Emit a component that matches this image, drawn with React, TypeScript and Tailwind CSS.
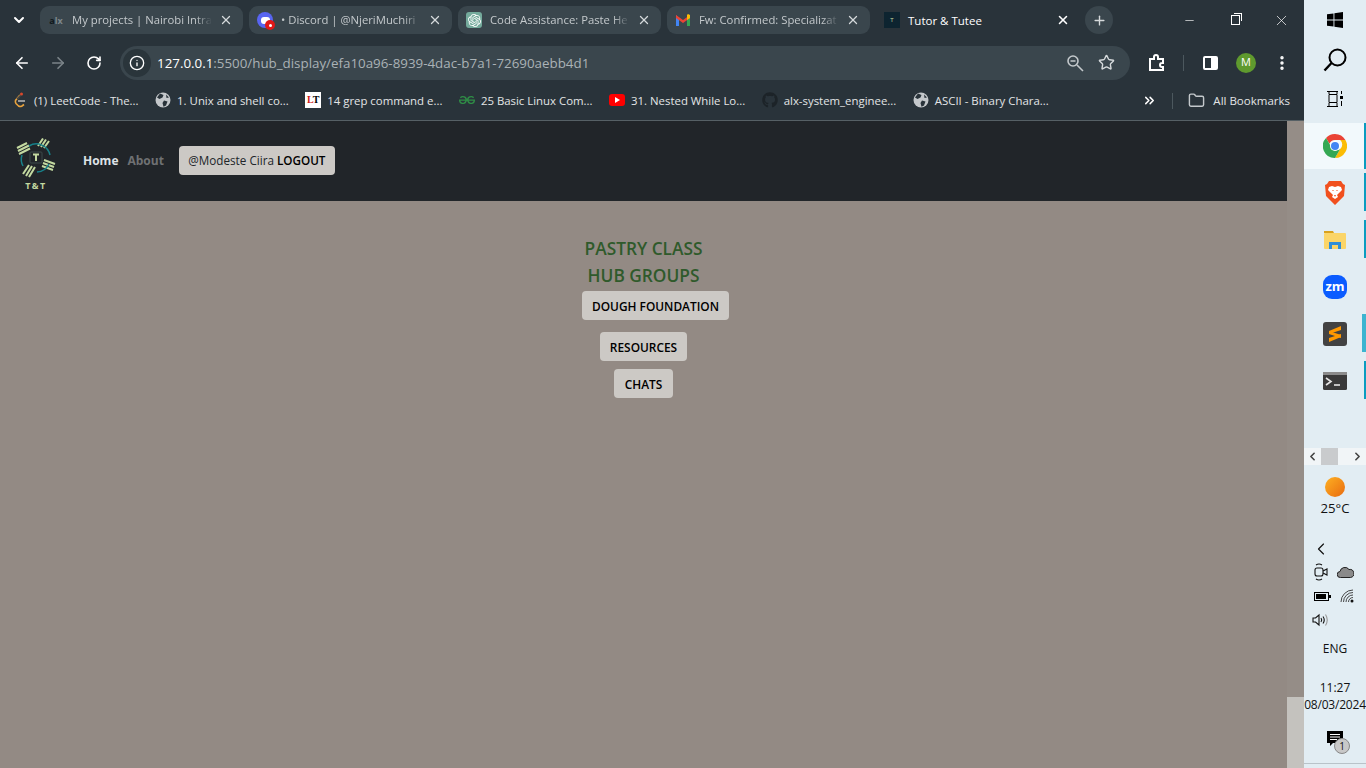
import React from 'react';
import { ArrowLeft, ArrowRight, RotateCw, Info, Star, ChevronDown, ChevronLeft, ChevronRight, ChevronsRight, X, Plus, Minus, EllipsisVertical, Folder } from 'lucide-react';
import { FaGithub } from 'react-icons/fa';
import { SiGeeksforgeeks, SiOpenai } from 'react-icons/si';

const chromeFont = "font-['Open_Sans','Noto_Sans',sans-serif]";

const LogoIcon = () => (
  <svg width="40" height="40" viewBox="0 0 40 40">
    <g stroke="#c3d9a0" strokeWidth="2" fill="none">
      <path d="M1 10 L11 5 M2 13 L13 7.5 M3 16 L14 10.5" />
      <path d="M22 8 L27 0.5 M25 9 L30 1.5 M28 10 L33 3" />
      <path d="M28 22 L39 26 M27 25 L38 29 M26 28 L37 32" />
      <path d="M19 29 L13 39 M16 28 L10 38 M13 27 L7 36" />
    </g>
    <g stroke="#178089" strokeWidth="1.5" fill="none">
      <path d="M13 8 A14 14 0 0 1 34 17" />
      <path d="M33 26 A14 14 0 0 1 21 34" />
      <path d="M7 28 A14 14 0 0 1 6 17" />
    </g>
    <rect x="14" y="14" width="12" height="11" rx="1" fill="#212529" stroke="#3d4a4a" />
    <path d="M17 16.5 H23 M20 16.5 V23" stroke="#c3d9a0" strokeWidth="2" />
  </svg>
);

const ChromeLogo = () => (
  <svg width="24" height="24" viewBox="0 0 24 24">
    <path d="M12 0a12 12 0 0 1 10.4 6H12a6 6 0 0 0-5.6 3.8L3 3.9A12 12 0 0 1 12 0z" fill="#ea4335" />
    <path d="M22.4 6A12 12 0 0 1 12 24l5.2-9a6 6 0 0 0 0-9z" fill="#fbbc04" />
    <path d="M12 24A12 12 0 0 1 3 3.9L8 12.6a6 6 0 0 0 9.2 2.4z" fill="#34a853" />
    <circle cx="12" cy="12" r="5" fill="#fff" />
    <circle cx="12" cy="12" r="4" fill="#4285f4" />
  </svg>
);

const GmailIcon = () => (
  <svg width="16" height="16" viewBox="0 0 16 16">
    <path d="M1 3v11h3V7z" fill="#4285f4" />
    <path d="M15 3v11h-3V7z" fill="#34a853" />
    <path d="M1 3l7 5 7-5v3L8 11 1 6z" fill="#ea4335" />
    <path d="M13 2l2 1v3l-3 2V3z" fill="#fbbc04" />
  </svg>
);

// grey globe favicon chrome shows when a page has none
const GlobeIcon = () => (
  <svg width="16" height="16" viewBox="0 0 16 16">
    <circle cx="8" cy="8" r="7.5" fill="#c4c8cb" />
    <path d="M5 1.5 8.5 3 7.5 5.5 4.5 7 2 5.5ZM9 8.5l3.5 1-1.5 4-2.5 1.2L7.5 11ZM11 2.5l3 3-2.5.5z" fill="#29333a" />
  </svg>
);

const tabs = [
  {
    title: 'My projects | Nairobi Intra',
    w: 'w-[203px]',
    icon: <span className="text-[9px] leading-none font-bold text-[#10181c]">a<span className="text-[#7d868b]">l</span><span className="text-[#7d868b]">x</span></span>,
  },
  {
    title: '• Discord | @NjeriMuchiri',
    w: 'w-[203px]',
    icon: (
      <span className="relative w-4 h-4 rounded-full bg-[#5865f2] flex items-center justify-center">
        <span className="w-[9px] h-[7px] rounded-[3px] bg-white" />
        <span className="absolute -right-[2px] -bottom-[2px] w-[10px] h-[10px] rounded-full bg-[#e01818] flex items-center justify-center">
          <span className="w-[3px] h-[3px] rounded-full bg-white" />
        </span>
      </span>
    ),
  },
  {
    title: 'Code Assistance: Paste He',
    w: 'w-[203px]',
    icon: (
      <span className="w-4 h-4 rounded-[3px] bg-[#74aa9c] flex items-center justify-center text-white">
        <SiOpenai size={13} />
      </span>
    ),
  },
  { title: 'Fw: Confirmed: Specializat', w: 'w-[203px]', icon: <GmailIcon /> },
];

const bookmarks = [
  {
    title: '(1) LeetCode - The...',
    icon: (
      <svg width="16" height="16" viewBox="0 0 16 16" fill="none">
        <path d="M8 3 L3.5 8.5 Q3 10 4 11.5 L6.5 14 Q8 15 10 14 L12 12.5" stroke="#e8a33d" strokeWidth="1.6" />
        <path d="M6 9 H13" stroke="#b3b3b3" strokeWidth="1.6" />
        <path d="M9 3 L5 7" stroke="#444" strokeWidth="1.6" />
        <circle cx="9.5" cy="2" r="1.5" fill="#d9482b" />
      </svg>
    ),
  },
  { title: '1. Unix and shell co...', icon: <GlobeIcon /> },
  {
    title: '14 grep command e...',
    icon: <span className="w-4 h-4 bg-white text-[10px] leading-4 font-bold text-center font-['Liberation_Serif',serif]"><span className="text-[#d01818]">L</span><span className="text-black">T</span></span>,
  },
  { title: '25 Basic Linux Com...', icon: <SiGeeksforgeeks size={16} className="text-[#2f8d46]" /> },
  {
    title: '31. Nested While Lo...',
    icon: (
      <span className="w-4 h-3 rounded-[3px] bg-[#f00] flex items-center justify-center">
        <span className="w-0 h-0 border-y-[3px] border-y-transparent border-l-[5px] border-l-white" />
      </span>
    ),
  },
  { title: 'alx-system_enginee...', icon: <FaGithub size={16} className="text-[#1c2328]" /> },
  { title: 'ASCII - Binary Chara...', icon: <GlobeIcon /> },
];

const TabStrip = () => (
  <div className="h-[41px] flex items-start pt-[6px] pl-[5px]">
    <div className="w-[28px] h-[28px] flex items-center justify-center text-white">
      <ChevronDown size={16} strokeWidth={3} />
    </div>
    <div className="flex gap-[6px] ml-[7px]">
      {tabs.map((t) => (
        <div key={t.title} className={`${t.w} h-[28px] rounded-[9px] bg-[#3a464d] flex items-center pl-[8px] pr-[10px]`}>
          <span className="w-4 h-4 flex items-center justify-center shrink-0">{t.icon}</span>
          <span className="ml-[8px] w-[140px] pt-[1px] text-[11.3px] text-[#c4c9cc] whitespace-nowrap [mask-image:linear-gradient(to_right,black_88%,transparent)]">{t.title}</span>
          <X size={14} strokeWidth={2.2} className="ml-auto shrink-0 text-[#d5d9db]" />
        </div>
      ))}
      <div className="w-[203px] h-[28px] flex items-center pl-[8px] pr-[9px]">
        <span className="w-4 h-4 bg-[#0d2430] shrink-0 flex items-center justify-center text-[6px] text-[#c7dba0]">T</span>
        <span className="ml-[8px] flex-1 pt-[1px] text-[11.5px] text-white whitespace-nowrap">Tutor &amp; Tutee</span>
        <X size={14} strokeWidth={2.6} className="text-white" />
      </div>
    </div>
    <div className="w-[28px] h-[28px] ml-[6px] rounded-full bg-[#3a464d] flex items-center justify-center text-[#d5d9db]">
      <Plus size={15} strokeWidth={2.2} />
    </div>
    <div className="ml-auto flex items-center h-[28px] text-white">
      <div className="w-[46px] flex justify-center"><Minus size={13} strokeWidth={1.2} /></div>
      <div className="w-[46px] flex justify-center">
        <span className="relative w-[9px] h-[10px] border border-white">
          <span className="absolute -top-[3px] -right-[3px] w-[8px] h-[8px] border-t border-r border-white" />
        </span>
      </div>
      <div className="w-[46px] flex justify-center"><X size={17} strokeWidth={1} /></div>
    </div>
  </div>
);

const Toolbar = () => (
  <div className="h-[43px] flex items-center pl-[13px]">
    <ArrowLeft size={18} strokeWidth={2.2} className="text-white" />
    <ArrowRight size={18} strokeWidth={2.2} className="text-[#7b8489] ml-[18px]" />
    <RotateCw size={16} strokeWidth={2.4} className="text-white ml-[19px]" />
    <div className="ml-[18px] w-[1010px] h-[34px] rounded-full bg-[#3a464d] flex items-center pl-[3px] pr-[15px]">
      <span className="w-[28px] h-[28px] rounded-full bg-[#2a353b] flex items-center justify-center">
        <Info size={16} strokeWidth={2} className="text-white" />
      </span>
      <span className="ml-[6px] pt-[1px] text-[13.35px] text-[#aab2b6] whitespace-nowrap">
        <span className="text-white">127.0.0.1</span>:5500/hub_display/efa10a96-8939-4dac-b7a1-72690aebb4d1
      </span>
      <svg width="18" height="18" viewBox="0 0 18 18" fill="none" stroke="#c4c9cc" strokeWidth="1.6" className="ml-auto">
        <circle cx="7" cy="7" r="5" />
        <path d="M11 11l6 6M4.5 7h5" />
      </svg>
      <Star size={17} strokeWidth={2} className="ml-[14px] text-[#d5d9db]" />
    </div>
    <svg width="18" height="18" viewBox="0 0 18 18" className="ml-[18px]" fill="none" stroke="#fff" strokeWidth="2">
      <path d="M2 5h4V3a2 2 0 0 1 4 0v2h5v4h-1a2 2 0 0 0 0 4h1v3H2z" />
    </svg>
    <span className="ml-[17px] w-px h-[16px] bg-[#4c585e]" />
    <span className="ml-[19px] w-[15px] h-[14px] rounded-[2px] border-2 border-white bg-white flex">
      <span className="w-[6px] h-full bg-[#29333a]" />
    </span>
    <span className="ml-[18px] w-[20px] h-[20px] rounded-full bg-[#5f9a2e] text-white text-[11px] flex items-center justify-center">M</span>
    <EllipsisVertical size={18} strokeWidth={2.6} className="text-white ml-[17px]" />
  </div>
);

const BookmarksBar = () => (
  <div className="h-[37px] flex items-center pl-[12px] pb-[3px] border-b border-[#566065]">
    <div className="flex items-center gap-[16.5px]">
      {bookmarks.map((b) => (
        <div key={b.title} className="flex items-center gap-[6px] whitespace-nowrap">
          <span className="w-4 h-4 flex items-center justify-center shrink-0">{b.icon}</span>
          <span className="text-[11.4px] text-[#e3e5e6]">{b.title}</span>
        </div>
      ))}
    </div>
    <div className="ml-auto flex items-center pr-[14px]">
      <ChevronsRight size={15} strokeWidth={2.4} className="text-white" />
      <span className="ml-[15px] w-px h-[16px] bg-[#4c585e]" />
      <Folder size={17} className="ml-[15px] text-[#c4c9cc]" />
      <span className="ml-[8px] text-[11.5px] text-[#e3e5e6]">All Bookmarks</span>
    </div>
  </div>
);

const NavBar = () => (
  <nav className="h-[80px] bg-[#212529] flex items-start pl-[16px] font-['Open_Sans',sans-serif]">
    <div className="w-[40px] pt-[17px] flex flex-col items-center">
      <LogoIcon />
      <span className="text-[9px] leading-[10px] mt-[3px] font-bold tracking-[1.5px] text-[#c3d9a0]">T&amp;T</span>
    </div>
    <a className="ml-[27px] mt-[32px] text-[12px] leading-[16px] font-bold text-[#dee2e6]">Home</a>
    <a className="ml-[9px] mt-[32px] text-[12px] leading-[16px] font-bold text-[#6f7173]">About</a>
    <button className="ml-[15px] mt-[25px] w-[156px] h-[29px] rounded-[4px] bg-[#ccc9c5] text-[11.7px] text-[#212529] whitespace-nowrap">
      @Modeste Ciira <span className="font-semibold text-black">LOGOUT</span>
    </button>
  </nav>
);

const HubButton = ({ label, className = '' }: { label: string; className?: string }) => (
  <button className={`h-[29px] pt-[2px] rounded-[4px] bg-[#ccc9c5] text-[11.9px] font-semibold text-black whitespace-nowrap ${className}`}>
    {label}
  </button>
);

const PageContent = () => (
  <main className="flex-1 flex flex-col items-center pt-[36px] font-['Open_Sans',sans-serif]">
    <h2 className="text-[17.3px] leading-[24px] font-semibold text-[#2f5a2b]">PASTRY CLASS</h2>
    <h2 className="text-[17.3px] leading-[24px] mt-[3px] font-semibold text-[#2f5a2b]">HUB GROUPS</h2>
    <HubButton label="DOUGH FOUNDATION" className="w-[147px] ml-[24px] mt-[3px]" />
    <HubButton label="RESOURCES" className="w-[87px] mt-[12px]" />
    <HubButton label="CHATS" className="w-[59px] mt-[8px]" />
  </main>
);

const TaskIcon = ({ children, bar = false, active = false, wideBar = false }: { children: React.ReactNode; bar?: boolean; active?: boolean; wideBar?: boolean }) => (
  <div className={`relative flex items-center justify-center ${active ? 'h-[46px] bg-[#f2f9fc]' : 'h-[47px]'}`}>
    {children}
    {bar && (
      <span
        className={`absolute right-0 ${active ? 'top-0 h-[46px]' : 'top-[4px] h-[38px]'} ${wideBar ? 'w-[4px] bg-[#3cb4d0]' : 'w-[2px] bg-[#0a9cc0]'}`}
      />
    )}
  </div>
);

const Taskbar = () => (
  <aside className="relative w-[62px] h-[768px] shrink-0 bg-[#e2edf3] flex flex-col items-stretch font-['Open_Sans',sans-serif] text-[#111]">
    <div className="h-[123px] flex flex-col items-center pt-[12px]">
      <svg width="16" height="16" viewBox="0 0 16 16" fill="#000">
        <path d="M0 2.3 6.5 1.4V7.5H0zM7.4 1.3 16 0V7.5H7.4zM0 8.4H6.5V14.6L0 13.7zM7.4 8.4H16V16L7.4 14.7z" />
      </svg>
      <svg width="24" height="24" viewBox="0 0 24 24" fill="none" stroke="#000" strokeWidth="2" className="mt-[20px]">
        <circle cx="14.5" cy="9.5" r="8" />
        <path d="M8.5 15 L1.5 22.5" strokeWidth="2.4" />
      </svg>
      <svg width="16" height="16" viewBox="0 0 16 16" fill="none" stroke="#000" className="mt-[19px]">
        <path d="M0 .5H11M2 3.5H10V11.5H2ZM0 15.5H11M2 .5V3M10 .5V3M2 12V15M10 12V15" />
        <rect x="13" y="5" width="3" height="3" fill="#000" stroke="none" />
        <path d="M14.5 0V3M14.5 10V15" />
      </svg>
    </div>
    <TaskIcon active bar><ChromeLogo /></TaskIcon>
    <TaskIcon bar>
      <svg width="20" height="24" viewBox="0 0 20 24">
        <path d="M4 0h12l2 3 2 1-1 11-9 9-9-9L0 4l2-1z" fill="#f1501e" />
        <path d="M4 6l3-1 3 1 3-1 3 1 1 3-3 3-2 2 1 2-3 2-3-2 1-2-2-2-3-3z" fill="#fff" />
        <path d="M7 9h2l-1 1zM11 9h2l-1 1zM9 14h2l-1 2z" fill="#f1501e" />
      </svg>
    </TaskIcon>
    <TaskIcon bar>
      <svg width="22" height="18" viewBox="0 0 22 18">
        <path d="M0 0h9l1 2H0z" fill="#d9a21e" />
        <rect y="2" width="22" height="16" rx="1" fill="#fbd568" />
        <path d="M5 18v-7h12v7h-3v-4H8v4z" fill="#2f8ed8" />
      </svg>
    </TaskIcon>
    <TaskIcon>
      <span className="w-[24px] h-[24px] rounded-[9px] bg-[#0b5cff] text-white text-[13px] leading-none font-bold flex items-center justify-center">zm</span>
    </TaskIcon>
    <TaskIcon bar wideBar>
      <span className="w-[24px] h-[24px] rounded-[3px] bg-[#424242] flex items-center justify-center">
        <svg width="12" height="16" viewBox="0 0 12 16" fill="#ff9800">
          <path d="M12 0v4L0 8V5z" />
          <path d="M0 5l12 4v3L0 8z" />
          <path d="M12 8v3L0 16v-4z" />
        </svg>
      </span>
    </TaskIcon>
    <TaskIcon bar>
      <svg width="24" height="18" viewBox="0 0 24 18">
        <rect width="24" height="18" rx="1.5" fill="#3a3a3a" />
        <rect width="24" height="3" fill="#8b8b8b" />
        <path d="M3 6l5 3.5L3 13" stroke="#e6e6e6" strokeWidth="1.6" fill="none" />
        <path d="M11 13h6" stroke="#e6e6e6" strokeWidth="1.6" />
      </svg>
    </TaskIcon>

    <div className="mt-[44px] h-[17px] bg-[#f1f5f7] flex items-center text-[#444] px-[2px]">
      <ChevronLeft size={13} strokeWidth={3} />
      <span className="w-[17px] h-full ml-[2px] bg-[#c9cbcd]" />
      <ChevronRight size={13} strokeWidth={3} className="ml-auto" />
    </div>

    <div className="mt-[12px] flex flex-col items-center">
      <span className="w-[20px] h-[20px] rounded-full bg-gradient-to-br from-[#fdb022] to-[#e86a10]" />
      <span className="mt-[2px] text-[13.2px] leading-[18px]">25°C</span>
    </div>

    <div className="mt-[22px] flex flex-col">
      <ChevronLeft size={20} strokeWidth={1.4} className="ml-[7px]" />
      <div className="mt-[4px] ml-[10px] flex items-center gap-[9px]">
        <svg width="14" height="18" viewBox="0 0 14 18" fill="none" stroke="#111" strokeWidth="1.1">
          <rect x="1" y="5" width="8" height="8" rx="2" />
          <path d="M9 8l4-2v6l-4-2" />
          <path d="M2 2Q5 0 8 2M2 16Q5 18 8 16" />
        </svg>
        <svg width="17" height="12" viewBox="0 0 17 12" stroke="#222" strokeWidth="1">
          <path d="M3.5 11.5a3 3 0 0 1-.5-6 5 5 0 0 1 9-2 3.5 3.5 0 0 1 1.5 8z" fill="#8a8a8a" />
        </svg>
      </div>
      <div className="mt-[8px] ml-[10px] flex items-center gap-[11px]">
        <span className="w-[15px] h-[9px] border border-black flex p-[1px] relative">
          <span className="w-[10px] h-full bg-black" />
          <span className="absolute -right-[3px] top-[2px] w-[2px] h-[3px] bg-black" />
        </span>
        <svg width="14" height="14" viewBox="0 0 14 14" fill="none" stroke="#333" strokeWidth="0.9">
          <path d="M1 13A12 12 0 0 1 13 1M3.5 13A9.5 9.5 0 0 1 13 3.5M6 13A7 7 0 0 1 13 6M8.5 13A4.5 4.5 0 0 1 13 8.5" />
          <circle cx="12" cy="12" r="1.5" fill="#111" stroke="none" />
        </svg>
      </div>
      <svg width="17" height="16" viewBox="0 0 17 16" fill="none" stroke="#111" strokeWidth="1.1" className="mt-[9px] ml-[8px]">
        <path d="M1 6h2.5L7 3v10L3.5 10H1z" />
        <path d="M9 6q1.5 2 0 4M11 4.5q2.5 3.5 0 7" />
        <path d="M13.5 2.5q3.5 5.5 0 11" stroke="#999" />
      </svg>
    </div>

    <span className="mt-[13px] text-center text-[12px] leading-[16px]">ENG</span>
    <span className="mt-[23px] text-center text-[12px] leading-[16px]">11:27</span>
    <span className="mt-[1px] text-center text-[12px] leading-[16px] tracking-[-0.2px] whitespace-nowrap">08/03/2024</span>

    <div className="relative mt-[19px] h-[24px] flex justify-center">
      <svg width="16" height="16" viewBox="0 0 16 16" className="mt-[-1px]">
        <path d="M0 0H16V12H6L3 15V12H0z" fill="#000" />
        <path d="M3 3.5H13M3 6H13M3 8.5H10" stroke="#fff" />
      </svg>
      <span className="absolute left-[30px] top-[6px] w-[16px] h-[16px] rounded-full bg-[#c8c8c8] border border-[#888] text-[10px] leading-[14px] text-center">1</span>
    </div>
    <span className="absolute left-0 right-0 bottom-[4px] h-px bg-[#b9c3c9]" />
  </aside>
);

export default function App() {
  return (
    <div className="w-[1366px] h-[768px] flex overflow-hidden">
      <div className="w-[1304px] h-[768px] flex flex-col">
        <header className={`h-[121px] bg-[#29333a] shrink-0 ${chromeFont}`}>
          <TabStrip />
          <Toolbar />
          <BookmarksBar />
        </header>
        <div className="flex-1 flex bg-[#938a84] min-h-0">
          <div className="flex-1 flex flex-col">
            <NavBar />
            <PageContent />
          </div>
          <div className="w-[17px] bg-[#958d87] flex flex-col justify-end">
            <div className="h-[71px] bg-[#c4c2be]" />
          </div>
        </div>
      </div>
      <Taskbar />
    </div>
  );
}
